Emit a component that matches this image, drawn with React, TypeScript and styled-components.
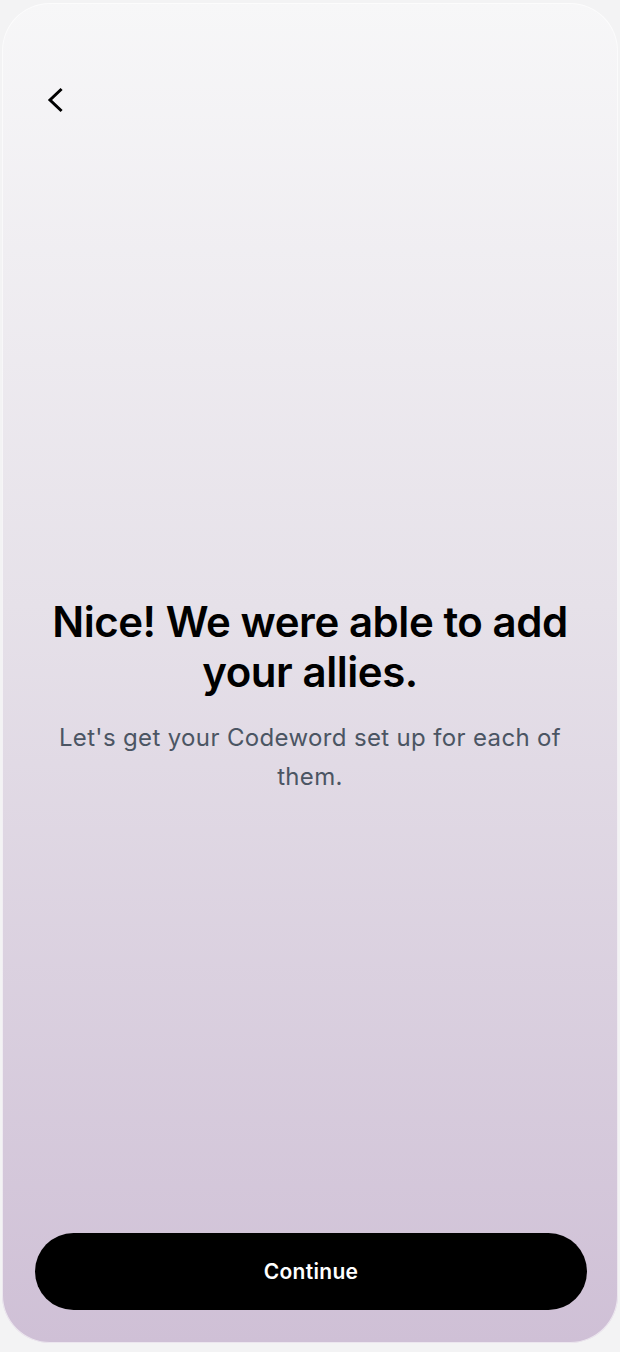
import React from "react";
import styled, { createGlobalStyle } from "styled-components";

const Global = createGlobalStyle`
  html, body { margin: 0; padding: 0; background: #f3f3f4; }
  * { box-sizing: border-box; }
`;

const Page = styled.div`
  padding: 3px 2px 9px 2px;
  display: flex;
  justify-content: center;
`;

const Frame = styled.div`
  width: 616px;
  height: 1340px;
  border-radius: 48px;
  background: linear-gradient(180deg, #f7f7f8 0%, #e6e1e9 45%, #cfc0d6 100%);
  box-shadow: inset 0 0 0 1px rgba(255, 255, 255, 0.6);
  display: flex;
  flex-direction: column;
  overflow: hidden;
`;

const Header = styled.div`
  padding: 83px 0 0 40px;
  height: 120px;
`;

const BackButton = styled.button`
  width: 28px;
  height: 28px;
  padding: 0;
  border: none;
  background: transparent;
  cursor: pointer;
  display: flex;
  align-items: center;
  justify-content: center;
`;

const Content = styled.div`
  flex: 1;
  display: flex;
  flex-direction: column;
  align-items: center;
  justify-content: center;
  padding: 37px 40px 0;
  text-align: center;
`;

const Title = styled.h1`
  margin: 0;
  font-family: Inter, "Noto Sans", sans-serif;
  font-weight: 600;
  font-size: 42px;
  line-height: 50px;
  color: #000;
  letter-spacing: -0.45px;
`;

const Subtitle = styled.p`
  margin: 21px 0 0;
  font-family: Inter, "Noto Sans", sans-serif;
  font-weight: 400;
  font-size: 24px;
  line-height: 39px;
  color: #4b5563;
  letter-spacing: 0.35px;
`;

const Footer = styled.div`
  padding: 0 31px 33px 33px;
`;

const PrimaryButton = styled.button`
  width: 100%;
  height: 77px;
  border: none;
  border-radius: 38.5px;
  background: #000;
  color: #fff;
  font-family: Inter, "Noto Sans", sans-serif;
  font-weight: 600;
  font-size: 21px;
  letter-spacing: 0.3px;
  cursor: pointer;
`;

export default function App() {
  return (
    <>
      <Global />
      <Page>
        <Frame>
          <Header>
            <BackButton aria-label="Back">
              <svg width="28" height="28" viewBox="0 0 28 28" fill="none">
                <path d="M18.5 4 L8 14 L18.5 24" stroke="#000" strokeWidth="3" strokeLinecap="square" strokeLinejoin="miter" />
              </svg>
            </BackButton>
          </Header>
          <Content>
            <Title>Nice! We were able to add your allies.</Title>
            <Subtitle>Let's get your Codeword set up for each of them.</Subtitle>
          </Content>
          <Footer>
            <PrimaryButton>Continue</PrimaryButton>
          </Footer>
        </Frame>
      </Page>
    </>
  );
}
